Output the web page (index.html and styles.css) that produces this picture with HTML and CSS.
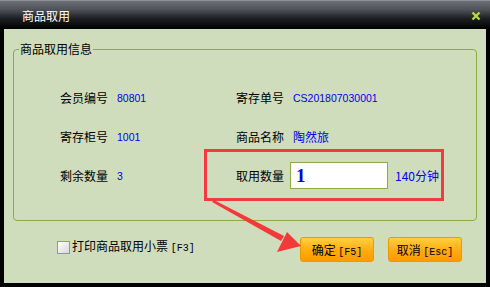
FILE: index.html
```html
<!DOCTYPE html>
<html lang="zh-CN">

<head>
    <meta charset="UTF-8">
    <title>商品取用</title>
    <link rel="stylesheet" href="styles.css">
</head>

<body>
    <div class="window">
        <div class="titlebar">
            <span class="title">商品取用</span>
            <svg class="close" viewBox="0 0 10 10" width="10" height="10">
                <path d="M1.5 1.5 L8.5 8.5 M8.5 1.5 L1.5 8.5" stroke="#b6dc3a" stroke-width="2.4" />
            </svg>
        </div>
        <div class="content">
            <fieldset class="info">
                <legend>商品取用信息</legend>
                <div class="grid">
                    <div class="field"><span class="label">会员编号</span><span class="value">80801</span></div>
                    <div class="field"><span class="label">寄存单号</span><span class="value">CS201807030001</span></div>
                    <div class="field"><span class="label">寄存柜号</span><span class="value">1001</span></div>
                    <div class="field"><span class="label">商品名称</span><span class="value cjk">陶然旅</span></div>
                    <div class="field"><span class="label">剩余数量</span><span class="value">3</span></div>
                    <div class="field marked">
                        <span class="label">取用数量</span>
                        <input class="qty" type="text" value="1">
                        <span class="value cjk unit">140分钟</span>
                    </div>
                </div>
            </fieldset>
            <div class="footer">
                <label class="print"><span class="box"></span><span>打印商品取用小票 <span class="key">[F3]</span></span></label>
                <div class="buttons">
                    <button class="btn">确定 <span class="key">[F5]</span></button>
                    <button class="btn">取消 <span class="key">[Esc]</span></button>
                </div>
            </div>
        </div>
        <!-- annotation arrow drawn over the dialog -->
        <svg class="arrow" viewBox="0 0 490 287" width="490" height="287">
            <polygon points="212,202 214,200 284,236 281,241" fill="#f23a3a" />
            <polygon points="301,246 277,252 287,232" fill="#f23a3a" />
        </svg>
    </div>
</body>

</html>
```

FILE: styles.css
```css
body {
    margin: 0;
    background-color: #000;
    font-family: "Noto Sans CJK SC", sans-serif;
    font-size: 12px;
}

.window {
    position: relative;
    width: 490px;
    height: 287px;
    display: flex;
    flex-direction: column;
    background-color: #000;
}

.titlebar {
    height: 29px;
    display: flex;
    align-items: center;
    justify-content: space-between;
    padding: 0 9px 0 22px;
    box-sizing: border-box;
    border-top: 1px solid #8e9298;
    background: linear-gradient(#6c7076, #50545a 30%, #1c1f23 62%, #000);
    color: #fff;
}

.title {
    line-height: 14px;
    margin-top: 2px;
}

.close {
    margin-top: 1px;
}

.content {
    flex: 1;
    margin: 0 4px 4px 4px;
    background-color: #d0ddbd;
    display: flex;
    flex-direction: column;
}

.info {
    margin: 12px 9px 0 9px;
    padding: 0 0 25px 46px;
    border: 1px solid #8cac40;
    border-radius: 4px;
    min-width: 0;
}

.info legend {
    padding: 0 1px;
    margin-left: -41px;
    line-height: 16px;
    color: #000;
}

.grid {
    display: grid;
    grid-template-columns: 176px 1fr;
    grid-auto-rows: 39px;
    padding-top: 21px;
}

.field {
    display: flex;
    align-items: center;
    position: relative;
}

.label {
    width: 48px;
    margin-right: 9px;
    color: #000;
}

.value {
    color: #0000f0;
    font-family: "Liberation Sans", sans-serif;
    font-size: 10.5px;
}

.value.cjk {
    font-family: "Noto Sans CJK SC", sans-serif;
    font-size: 12px;
}

.marked .label {
    margin-right: 6px;
}

.marked::before {
    content: "";
    position: absolute;
    left: -32px;
    top: -7px;
    width: 234px;
    height: 46px;
    border: 3px solid #f23c3c;
}

.qty {
    width: 98px;
    height: 27px;
    box-sizing: border-box;
    margin: 0 7px 0 0;
    padding: 0 5px;
    border: 1px solid #8cac40;
    background-color: #fff;
    color: #0000f0;
    font-family: "Liberation Serif", serif;
    font-weight: bold;
    font-size: 19px;
    outline: none;
}

.unit {
    font-family: "Liberation Sans", "Noto Sans CJK SC", sans-serif;
}

.footer {
    display: flex;
    align-items: flex-start;
    padding: 16px 24px 0 53px;
}

.print {
    display: flex;
    align-items: center;
    margin-top: 2px;
    color: #000;
    line-height: 13px;
}

.box {
    width: 11px;
    height: 11px;
    border: 1px solid #8cac40;
    background: linear-gradient(135deg, #fff, #d8d8d8);
    margin-right: 2px;
}

.key {
    font-family: "Liberation Mono", monospace;
    font-size: 10px;
}

.buttons {
    margin-left: auto;
    display: flex;
    gap: 14px;
}

.btn {
    width: 74px;
    height: 25px;
    padding: 0;
    border: 1px solid #e89a00;
    border-radius: 3px;
    background: linear-gradient(#ffd040, #ffab10 55%, #ff9a00);
    color: #000;
    font-family: "Noto Sans CJK SC", sans-serif;
    font-size: 12px;
}

.arrow {
    position: absolute;
    left: 0;
    top: 0;
    pointer-events: none;
}
```
